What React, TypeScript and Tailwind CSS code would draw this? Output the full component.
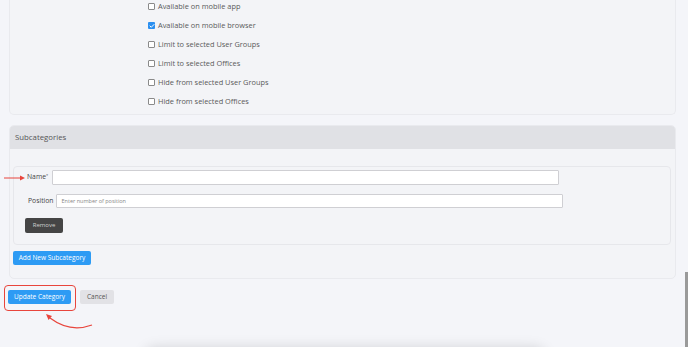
import { Check } from "lucide-react";

const options = [
  { label: "Available on mobile app", checked: false },
  { label: "Available on mobile browser", checked: true },
  { label: "Limit to selected User Groups", checked: false },
  { label: "Limit to selected Offices", checked: false },
  { label: "Hide from selected User Groups", checked: false },
  { label: "Hide from selected Offices", checked: false },
];

function CheckRow({ label, checked }: { label: string; checked: boolean }) {
  return (
    <div className="flex items-center gap-[3px] h-[19px]">
      {checked ? (
        <span className="w-[7px] h-[7px] rounded-[1px] bg-[#2b8ff0] flex items-center justify-center">
          <Check size={6} strokeWidth={4} className="text-white" />
        </span>
      ) : (
        <span className="w-[7px] h-[7px] rounded-[1px] border border-[#8a8a8a] bg-white" />
      )}
      <span className="text-[7.4px] text-[#5a5a5a]">{label}</span>
    </div>
  );
}

export default function App() {
  return (
    <div className="relative w-[688px] h-[347px] overflow-hidden bg-[#f4f5f9] font-['Open_Sans',sans-serif]">
      {/* top card, scrolled partly out of view */}
      <div className="ml-[9px] mr-[12px] -mt-[3px] pb-[3px] pl-[138px] bg-[#f3f4f7] border border-[#e9eaee] border-t-0 rounded-b-[5px]">
        {options.map((o) => (
          <CheckRow key={o.label} label={o.label} checked={o.checked} />
        ))}
      </div>

      {/* subcategories */}
      <div className="ml-[9px] mr-[12px] mt-[10px] bg-[#f3f4f7] border border-[#e9eaee] rounded-[5px] overflow-hidden">
        <div className="h-[23px] bg-[#e0e1e5] flex items-center px-[5px]">
          <span className="text-[7.8px] text-[#555]">Subcategories</span>
        </div>
        <div className="pt-[17px] pb-[13px] pl-[3px] pr-[4px]">
          <div className="border border-[#e6e7eb] rounded-[4px] pt-[3px] pb-[11px] pl-[13px]">
            <div className="flex items-center gap-[4px] h-[15px]">
              <span className="text-[6.8px] text-[#444]">
                Name<sup className="text-[4px]">*</sup>
              </span>
              <div className="w-[507px] h-[15px] bg-white border border-[#cfcfd3] rounded-[1px]" />
            </div>
            <div className="flex items-center gap-[2px] h-[14px] mt-[9px] pl-[1px]">
              <span className="text-[6.8px] text-[#444]">Position</span>
              <div className="w-[507px] h-[14px] bg-white border border-[#cfcfd3] rounded-[1px] flex items-center px-[5px]">
                <span className="text-[5.5px] text-[#888]">Enter number of position</span>
              </div>
            </div>
            <button className="mt-[10px] -ml-[2px] w-[38px] h-[15px] bg-[#454545] rounded-[2px] text-[6px] text-[#d0d0d0] flex items-center justify-center">
              Remove
            </button>
          </div>
          <button className="mt-[6px] w-[78px] h-[14px] bg-[#2d9bf4] rounded-[2px] text-[6.5px] text-white flex items-center justify-center">
            Add New Subcategory
          </button>
        </div>
      </div>

      {/* actions */}
      <div className="flex gap-[9px] ml-[8px] mt-[11px]">
        <button className="w-[63px] h-[14px] bg-[#2d9bf4] rounded-[2px] text-[6.5px] text-white flex items-center justify-center">
          Update Category
        </button>
        <button className="w-[34px] h-[14px] bg-[#e2e2e6] rounded-[2px] text-[6.5px] text-[#555] flex items-center justify-center">
          Cancel
        </button>
      </div>

      {/* annotations */}
      <div className="absolute left-[4px] top-[285px] w-[72px] h-[26px] border border-[#e8453c] rounded-[4px]" />
      <svg className="absolute left-0 top-0" width="688" height="347" viewBox="0 0 688 347" fill="none">
        <path d="M4 178 L22 178" stroke="#e8453c" strokeWidth="1" />
        <path d="M20 175.5 L25 178 L20 180.5 Z" fill="#e8453c" />
        <path d="M92 325 Q 70 333 50 318" stroke="#e8453c" strokeWidth="1.2" />
        <path d="M46 314 L52 316 L48.5 320 Z" fill="#e8453c" />
      </svg>

      {/* floating element shadow at bottom */}
      <div className="absolute left-[150px] top-[354px] w-[390px] h-[40px] rounded-[6px] bg-white shadow-[0_0_14px_6px_rgba(0,0,0,0.15)]" />

      {/* scrollbar */}
      <div className="absolute right-0 top-[272px] w-[3px] h-[75px] bg-[#9a9a9a]" />
    </div>
  );
}
